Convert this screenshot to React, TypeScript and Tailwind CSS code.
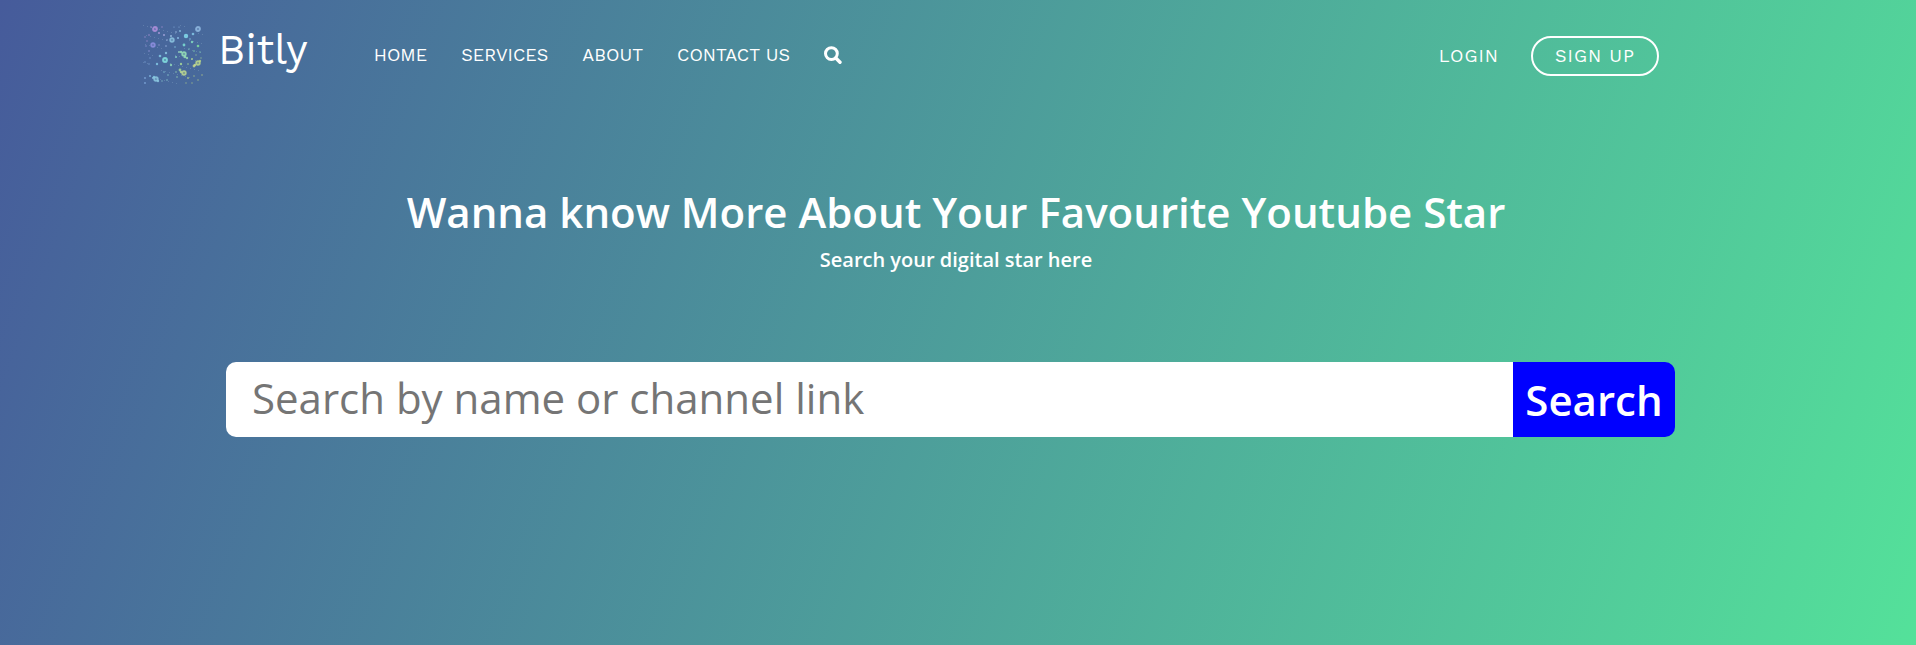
import React from "react";

type Dot = [number, number, number, string];

const rings: Dot[] = [
  [13, 5, 2, "#b08fdc"],
  [56, 5, 2, "#8fb8e0"],
  [30, 16, 1.8, "#8cc4e0"],
  [11, 21, 1.8, "#8f8fe0"],
  [42, 30, 1.8, "#96e0b8"],
  [23, 36, 2, "#84e0e0"],
  [56, 39, 1.8, "#bcd88c"],
  [42, 49, 1.8, "#bcd890"],
  [14, 55, 1.8, "#8cc8e0"],
];

const specks: Dot[] = [
  [44, 12, 2.2, "#84dcec"], [51, 10, 1.3, "#84c8e8"], [29, 12, 1, "#a0c4e8"], [50, 18, 1.2, "#84dcc0"],
  [42, 21, 1.4, "#7ee0d4"], [56, 22, 1.3, "#80dca0"], [24, 29, 1.2, "#8cc4e0"], [18, 32, 1.3, "#84c8e4"],
  [37, 28, 1, "#9cdcc0"], [34, 33, 1, "#8cdcc8"], [29, 41, 1.2, "#90d8b8"], [39, 40, 1.2, "#a8d898"],
  [52, 42, 1.4, "#c8d88c"], [38, 46, 1.4, "#a8d898"], [58, 37, 1.2, "#b0cc88"], [15, 40, 1.2, "#84c8e4"],
  [45, 34, 1.2, "#94d8b0"], [50, 35, 1, "#b4d890"], [12, 53, 1.2, "#80c8e0"], [8, 52, 1, "#80b8e0"],
  [22, 11, 1, "#a8a8e0"], [17, 9, 1, "#b49ce0"], [7, 11, 0.8, "#a890d4"], [3, 13, 0.7, "#a890d4"],
  [20, 3, 0.7, "#a890d4"], [9, 3, 0.8, "#a890d4"], [34, 8, 0.8, "#a0c0e8"], [38, 7, 0.9, "#90c8e8"],
  [36, 14, 1.1, "#8cc0e8"], [25, 16, 0.8, "#a0b8e8"], [24, 22, 0.8, "#a0b8e8"], [33, 23, 0.8, "#84c8e0"],
  [7, 27, 0.8, "#9898dc"], [4, 22, 0.7, "#9898dc"], [5, 17, 0.7, "#a890d4"], [17, 21, 0.7, "#9c9cdc"],
  [3, 38, 0.7, "#80a8dc"], [7, 40, 0.7, "#80a8dc"], [8, 34, 0.7, "#80a8dc"], [3, 54, 0.9, "#80a8dc"],
  [3, 59, 0.9, "#80a8dc"], [22, 48, 0.8, "#84c4d4"], [26, 51, 0.8, "#88c8cc"], [25, 56, 0.8, "#88c8cc"],
  [34, 48, 0.8, "#98d0b0"], [35, 53, 0.8, "#98d0b0"], [46, 54, 0.9, "#b0cc88"], [52, 52, 0.7, "#b0cc88"],
  [56, 56, 0.7, "#b0cc88"], [50, 59, 0.7, "#a8c088"], [44, 59, 0.7, "#a8c088"], [59, 34, 0.7, "#98c498"],
  [54, 31, 0.7, "#98c498"], [52, 27, 0.8, "#80d0b0"], [58, 28, 0.7, "#80d0b0"], [47, 25, 0.7, "#80d0c0"],
  [37, 3, 0.6, "#90b8e8"], [32, 3, 0.6, "#90b8e8"], [46, 40, 0.8, "#a8d898"], [20, 57, 0.7, "#88c8cc"],
  [39, 48, 1.2, "#b8d890"], [53, 41, 1.2, "#c4d88c"], [43, 33, 1.3, "#96e0b8"], [39, 28, 1.2, "#96e0b8"],
  [16, 57, 1.2, "#8cc8e0"], [11, 54, 1, "#8cc8e0"], [60, 51, 0.8, "#a8c088"], [48, 15, 0.8, "#84c8e8"],
];

const haze = Array.from({ length: 70 }, (_, i) => [1 + ((i * 23) % 60), 1 + ((i * 37) % 59)]);

function LogoMark() {
  return (
    <svg width="62" height="62" viewBox="0 0 62 62" className="block shrink-0" aria-hidden="true">
      {haze.map(([x, y], i) => (
        <rect key={`h${i}`} x={x} y={y} width="1" height="1" fill="#a9c8dc" opacity="0.25" />
      ))}
      {specks.map(([x, y, r, c], i) => (
        <circle key={`s${i}`} cx={x} cy={y} r={r} fill={c} opacity="0.85" />
      ))}
      {rings.map(([x, y, r, c], i) => (
        <circle
          key={`r${i}`}
          cx={x}
          cy={y}
          r={r}
          fill={c}
          fillOpacity="0.35"
          stroke={c}
          strokeWidth="1.8"
          strokeOpacity="0.85"
        />
      ))}
    </svg>
  );
}

function SearchIcon() {
  return (
    <svg width="18" height="18" viewBox="0 0 18 18" fill="none" stroke="currentColor" aria-hidden="true" className="block">
      <circle cx="7.4" cy="7.6" r="5.9" strokeWidth="3" />
      <path d="M11.8 12 L16 16.2" strokeWidth="3.4" strokeLinecap="round" />
    </svg>
  );
}

const links = ["Home", "Services", "About", "Contact Us"];

export default function App() {
  return (
    <div className="min-h-screen bg-[linear-gradient(110deg,#465b9b_0%,#54e19a_100%)] font-['Open_Sans',sans-serif] text-white">
      <header className="flex items-center pt-5 pr-[257px] pl-[142px] font-['Work_Sans','Inter',sans-serif]">
        <a href="#home" className="flex items-start gap-3.5">
          <span className="pt-1"><LogoMark /></span>
          <span className="text-[42px] leading-[60px]">Bitly</span>
        </a>
        <nav className="ml-[66px] flex items-center gap-[34px] pt-1 text-[18px] leading-6 uppercase">
          {links.map((label) => (
            <a key={label} href="#" className="whitespace-nowrap">{label}</a>
          ))}
          <button type="button" aria-label="Open search" className="cursor-pointer"><SearchIcon /></button>
        </nav>
        <div className="ml-auto flex items-center gap-8 pt-1.5 text-[18px] leading-6 tracking-[1px] uppercase">
          <a href="#login">Login</a>
          <a href="#signup" className="rounded-full border-2 px-[22px] py-[6px] whitespace-nowrap">Sign up</a>
        </div>
      </header>

      <main className="px-[226px] pt-[92px]">
        <div className="pr-1 text-center font-semibold">
          <h1 className="text-[42px] leading-[68px]">Wanna know More About Your Favourite Youtube Star</h1>
          <p className="pt-0.5 text-xl leading-6">Search your digital star here</p>
        </div>
        <form className="mt-[90px] mr-[15px] flex h-[75px]" onSubmit={(e) => e.preventDefault()}>
          <input
            type="text"
            aria-label="Search by name or channel link"
            placeholder="Search by name or channel link"
            className="min-w-0 flex-1 rounded-l-[10px] bg-white px-[26px] pb-1 text-[42px] text-gray-800 outline-none placeholder:text-[#757575]"
          />
          <button type="submit" className="w-[162px] cursor-pointer rounded-r-[10px] bg-[#0000ff] text-[42px] leading-[75px] font-semibold">
            Search
          </button>
        </form>
      </main>
    </div>
  );
}
